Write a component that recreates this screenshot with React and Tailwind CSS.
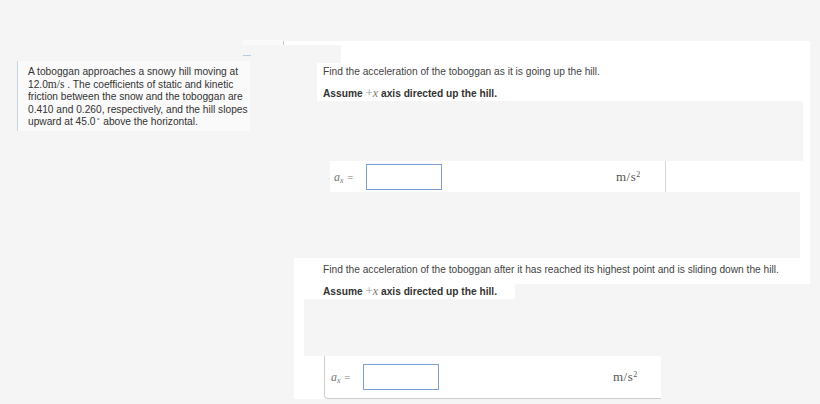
import React from 'react';

const sans = { fontFamily: '"Liberation Sans", Arial, sans-serif' };

// math-ish inline pieces rendered in a serif face
const MathX = () => (
  <span className="font-['Liberation_Serif',serif] font-normal">
    <span className="text-[#9a9a9a] text-[13px]">+</span>
    <span className="italic text-[#777] text-[12px]">x</span>
  </span>
);

const AnswerRow = () => (
  <div className="flex items-center h-full">
    <span className="font-['Liberation_Serif',serif] text-[#777] text-[12px] w-[34px] pl-[2px]">
      <span className="italic">a</span>
      <sub className="italic text-[8px]">x</sub>
      <span className="ml-[4px] text-[10px]">=</span>
    </span>
    <div className="w-[76px] h-[26px] border border-[#7f9fd4] bg-white" />
    <span className="ml-[174px] font-['Liberation_Serif',serif] text-[#555] text-[13px] tracking-[0.5px]">
      m/s<sup className="text-[8px]">2</sup>
    </span>
  </div>
);

const QuestionText = ({ children }) => (
  <p className="text-[10.2px] leading-[14px] text-[#444] whitespace-nowrap">{children}</p>
);

const AssumeText = () => (
  <p className="text-[10.2px] leading-[15px] font-bold text-[#333] whitespace-nowrap">
    Assume <MathX /> axis directed up the hill.
  </p>
);

export default function App() {
  return (
    <div className="w-[820px] h-[404px] bg-[#f5f5f5] flex overflow-hidden" style={sans}>
      {/* left column: problem statement */}
      <div className="w-[283px] shrink-0">
        <div className="h-[40px]" />
        <div className="ml-[243px] w-[40px] h-[5px] bg-[#fafafa]" />
        <div className="ml-[243px] mt-[10px] w-[8px] h-[1px] bg-[#b9cbe0]" />
        <div className="ml-[17px] mt-[5px] w-[233px] h-[70px] border-l border-[#c9d5e2] bg-[#fafafa] pl-[10px] pt-[5px] text-[10.2px] leading-[12.2px] text-[#333] whitespace-nowrap">
          <div>A toboggan approaches a snowy hill moving at</div>
          <div>
            12.0<span className="font-['Liberation_Serif',serif] text-[11.5px]">m/s</span> . The coefficients of static and kinetic
          </div>
          <div>friction between the snow and the toboggan are</div>
          <div>0.410 and 0.260, respectively, and the hill slopes</div>
          <div>
            upward at 45.0<sup className="text-[7px] text-[#999] ml-[1px]">∘</sup> above the horizontal.
          </div>
        </div>
      </div>

      {/* right column: question parts */}
      <div className="w-[537px] shrink-0 flex flex-col">
        <div className="h-[41px] shrink-0" />
        <div className="h-[4px] w-[527px] bg-white border-l border-[#b9cbe0] shrink-0" />

        <div className="h-[18px] flex shrink-0">
          <div className="w-[58px]" />
          <div className="w-[469px] bg-white" />
        </div>

        <div className="h-[38px] flex shrink-0">
          <div className="w-[34px]" />
          <div className="w-[493px] bg-white pl-[6px] pt-[2px]">
            <QuestionText>Find the acceleration of the toboggan as it is going up the hill.</QuestionText>
            <div className="mt-[6px]">
              <AssumeText />
            </div>
          </div>
        </div>

        <div className="h-[60px] flex shrink-0">
          <div className="w-[520px]" />
          <div className="w-[7px] bg-white" />
        </div>

        <div className="h-[31px] flex shrink-0">
          <div className="w-[47px]" />
          <div className="w-[480px] bg-white">
            <div className="w-[336px] h-full border-r border-[#d6d6d6] pl-[2px]">
              <AnswerRow />
            </div>
          </div>
        </div>

        <div className="h-[66px] flex shrink-0">
          <div className="w-[517px]" />
          <div className="w-[10px] bg-white" />
        </div>

        <div className="h-[26px] flex shrink-0">
          <div className="w-[11px]" />
          <div className="w-[516px] bg-white pl-[29px] pt-[5px]">
            <QuestionText>
              Find the acceleration of the toboggan after it has reached its highest point and is sliding down the hill.
            </QuestionText>
          </div>
        </div>

        <div className="h-[15px] flex shrink-0">
          <div className="w-[11px]" />
          <div className="w-[221px] bg-white pl-[29px] -mt-[1px]">
            <AssumeText />
          </div>
        </div>

        <div className="h-[57px] flex shrink-0">
          <div className="w-[11px]" />
          <div className="w-[10px] bg-white" />
        </div>

        <div className="h-[43px] flex shrink-0">
          <div className="w-[11px]" />
          <div className="w-[367px] bg-white pl-[30px]">
            <div className="h-full border-l border-b border-[#cfcfcf] rounded-bl-[4px] pl-[4px] pb-[1px]">
              <AnswerRow />
            </div>
          </div>
        </div>
      </div>
    </div>
  );
}
